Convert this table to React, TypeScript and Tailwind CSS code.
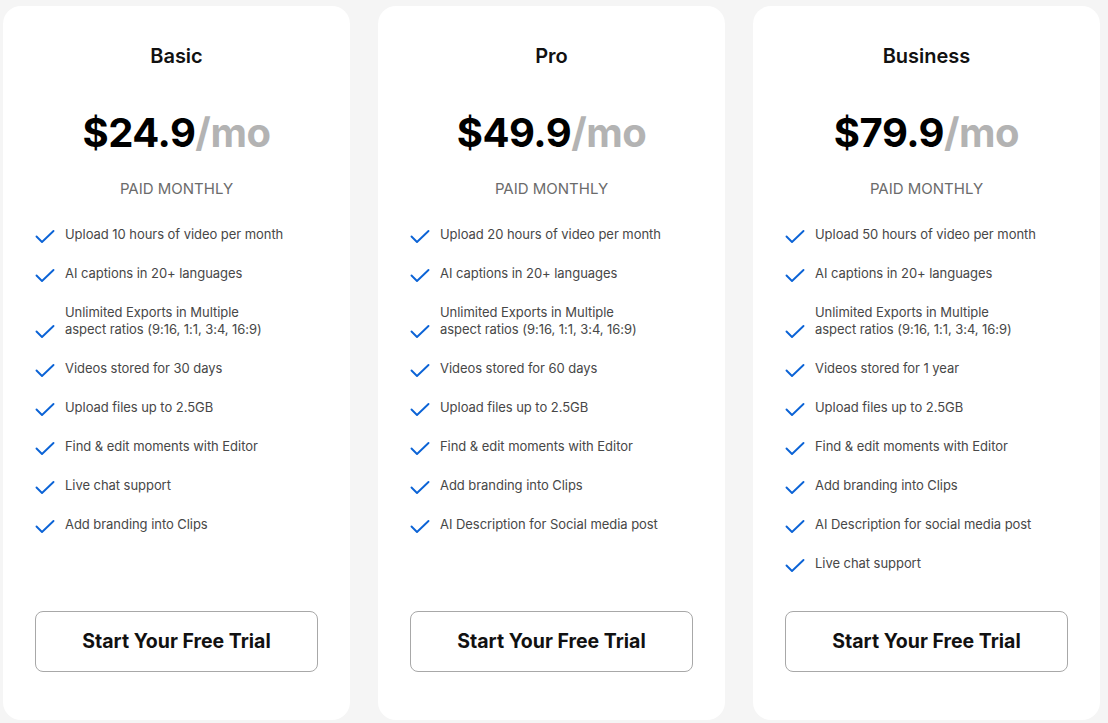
import React from "react";

interface Plan {
  name: string;
  price: string;
  features: string[][];
}

const PLANS: Plan[] = [
  {
    name: "Basic",
    price: "$24.9",
    features: [
      ["Upload 10 hours of video per month"],
      ["AI captions in 20+ languages"],
      ["Unlimited Exports in Multiple", "aspect ratios (9:16, 1:1, 3:4, 16:9)"],
      ["Videos stored for 30 days"],
      ["Upload files up to 2.5GB"],
      ["Find & edit moments with Editor"],
      ["Live chat support"],
      ["Add branding into Clips"],
    ],
  },
  {
    name: "Pro",
    price: "$49.9",
    features: [
      ["Upload 20 hours of video per month"],
      ["AI captions in 20+ languages"],
      ["Unlimited Exports in Multiple", "aspect ratios (9:16, 1:1, 3:4, 16:9)"],
      ["Videos stored for 60 days"],
      ["Upload files up to 2.5GB"],
      ["Find & edit moments with Editor"],
      ["Add branding into Clips"],
      ["AI Description for Social media post"],
    ],
  },
  {
    name: "Business",
    price: "$79.9",
    features: [
      ["Upload 50 hours of video per month"],
      ["AI captions in 20+ languages"],
      ["Unlimited Exports in Multiple", "aspect ratios (9:16, 1:1, 3:4, 16:9)"],
      ["Videos stored for 1 year"],
      ["Upload files up to 2.5GB"],
      ["Find & edit moments with Editor"],
      ["Add branding into Clips"],
      ["AI Description for social media post"],
      ["Live chat support"],
    ],
  },
];

function CheckIcon() {
  return (
    <svg viewBox="0 0 20 20" className="h-5 w-5 shrink-0 -mb-[4px]" fill="none">
      <path d="M1.5 9.5 L7 15 L18.5 4" stroke="#0b63d6" strokeWidth="1.9" strokeLinecap="round" strokeLinejoin="round" />
    </svg>
  );
}

function PlanCard({ plan }: { plan: Plan }) {
  return (
    <div className="flex w-[347px] flex-col rounded-[18px] bg-white px-8 pt-[36px] pb-[48px]">
      <h2 className="text-center text-[20px] leading-[28px] font-semibold text-[#111]">{plan.name}</h2>
      <div className="mt-[39px] text-center text-[40px] leading-[48px] font-bold tracking-[-0.5px]">
        <span className="text-black">{plan.price}</span>
        <span className="text-[#b3b3b3]">/mo</span>
      </div>
      <div className="mt-[22px] text-center text-[15px] leading-[20px] text-[#6b6b6b]">PAID MONTHLY</div>
      <ul className="mt-[27px] flex flex-col gap-[22px]">
        {plan.features.map((lines, i) => (
          <li key={i} className="flex items-end gap-[10px]">
            <CheckIcon />
            <span className="text-[13px] leading-[17px] tracking-[-0.05px] text-[#474747]">
              {lines.map((l, j) => (
                <span key={j} className="block">{l}</span>
              ))}
            </span>
          </li>
        ))}
      </ul>
      <button className="mt-auto h-[61px] w-full rounded-[8px] border border-[#a8a8a8] bg-white text-[19.5px] font-bold text-[#111]">
        Start Your Free Trial
      </button>
    </div>
  );
}

export default function App() {
  return (
    <div
      className="flex h-[723px] w-[1108px] gap-[28px] bg-[#f5f5f5] pt-[6px] pb-[3px] pl-[3px]"
      style={{ fontFamily: "Inter, 'Noto Sans', sans-serif" }}
    >
      {PLANS.map((p) => (
        <PlanCard key={p.name} plan={p} />
      ))}
    </div>
  );
}
